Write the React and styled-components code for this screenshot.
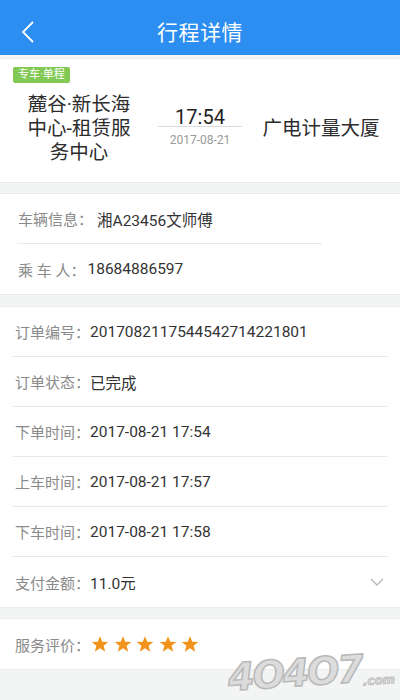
import styled, { createGlobalStyle } from "styled-components"

const GlobalStyle = createGlobalStyle`
  html, body {
    margin: 0;
    padding: 0;
    background: #f3f4f4;
  }
  body {
    font-family: Roboto, "Noto Sans CJK SC", sans-serif;
  }
  * {
    box-sizing: border-box;
  }
`

const Page = styled.div`
  position: relative;
  width: 400px;
  min-height: 700px;
  overflow: hidden;
  background: #f3f4f4;
`

const Header = styled.div`
  display: flex;
  align-items: center;
  justify-content: center;
  position: relative;
  height: 55px;
  padding-top: 7px;
  background: #2b8ef0;
  color: #fff;
`

const Title = styled.h1`
  margin: 0;
  font-size: 21px;
  font-weight: 400;
  letter-spacing: 0.5px;
`

const BackButton = styled.button`
  position: absolute;
  left: 16px;
  top: 19px;
  width: 24px;
  height: 26px;
  padding: 0;
  border: 0;
  background: none;
  display: flex;
  align-items: center;
  justify-content: center;
`

const Card = styled.div`
  background: #fff;
  margin-top: ${(p) => p.$gap || 10}px;
  border-top: 1px solid #ebebeb;
  border-bottom: 1px solid #ebebeb;
`

const TripCard = styled(Card)`
  padding: 4px 0 13px;
`

const Tag = styled.span`
  display: inline-block;
  margin-left: 13px;
  height: 16px;
  padding: 0 5px;
  line-height: 16px;
  font-size: 11px;
  color: #fff;
  background: #82c954;
  border-radius: 2px;
`

const Route = styled.div`
  display: grid;
  grid-template-columns: 158px 84px 158px;
  align-items: center;
  height: 80px;
  margin-top: 6px;
`

const Place = styled.div`
  text-align: center;
  font-size: 19.5px;
  line-height: 24px;
  color: #2c2c2c;
`

const TimeBox = styled.div`
  display: flex;
  flex-direction: column;
  align-items: center;
  margin-top: -3px;
`

const Clock = styled.div`
  width: 84px;
  text-align: center;
  font-size: 20px;
  line-height: 18px;
  color: #222;
  border-bottom: 1px solid #dcdcdc;
`

const DateText = styled.div`
  margin-top: 5px;
  font-size: 12px;
  line-height: 16px;
  color: #9a9a9a;
`

const Row = styled.div`
  display: flex;
  align-items: center;
  height: 50px;
  margin: 0 ${(p) => p.$inset || 13}px;
  padding-left: ${(p) => p.$pad || 2}px;
  border-bottom: ${(p) => (p.$last ? "none" : "1px solid #e8e8e8")};
  font-size: 15px;
`

const ShortRow = styled(Row)`
  margin-right: 78px;
`

const Label = styled.span`
  color: #8a8a8a;
  white-space: pre;
  margin-right: ${(p) => p.$space || 0}px;
`

const Value = styled.span`
  color: #333;
  font-size: 15.5px;
  flex: 1;
`

const Stars = styled.div`
  display: flex;
  gap: 4.5px;
  margin-left: 1px;
`

const Chevron = styled.span`
  display: flex;
  margin-right: 3px;
`

const Watermark = styled.div`
  position: absolute;
  right: 6px;
  bottom: 8px;
  display: flex;
  align-items: flex-end;
  transform: rotate(-4deg);
  font-family: "DejaVu Sans", sans-serif;
  font-weight: 900;
  font-style: italic;
  color: #dcdcdc;
  -webkit-text-stroke: 1.5px #b9b9b9;
  pointer-events: none;
`

const MarkBig = styled.span`
  font-size: 38px;
  line-height: 40px;
  letter-spacing: -2px;
`

const MarkSmall = styled.span`
  font-size: 12px;
  line-height: 14px;
  -webkit-text-stroke: 0.8px #b9b9b9;
`

const Star = () => (
  <svg width="18" height="18" viewBox="0 0 24 24">
    <polygon
      points="12,1.5 15,9 23,9.3 16.8,14.3 19,22.2 12,17.7 5,22.2 7.2,14.3 1,9.3 9,9"
      fill="#f2931c"
    />
  </svg>
)

const orderRows = [
  ["订单编号：", "2017082117544542714221801"],
  ["订单状态：", "已完成"],
  ["下单时间：", "2017-08-21 17:54"],
  ["上车时间：", "2017-08-21 17:57"],
  ["下车时间：", "2017-08-21 17:58"],
]

const App = () => {
  return (
    <Page>
      <GlobalStyle />
      <Header>
        <BackButton>
          <svg width="14" height="22" viewBox="0 0 14 22">
            <polyline
              points="12,1 2,11 12,21"
              fill="none"
              stroke="#fff"
              strokeWidth="1.8"
            />
          </svg>
        </BackButton>
        <Title>行程详情</Title>
      </Header>

      <TripCard $gap={3}>
        <Tag>专车·单程</Tag>
        <Route>
          <Place>
            麓谷·新长海
            <br />
            中心-租赁服
            <br />
            务中心
          </Place>
          <TimeBox>
            <Clock>17:54</Clock>
            <DateText>2017-08-21</DateText>
          </TimeBox>
          <Place>广电计量大厦</Place>
        </Route>
      </TripCard>

      <Card>
        <ShortRow $inset={17} $pad={1}>
          <Label $space={4}>车辆信息：</Label>
          <Value>湘A23456文师傅</Value>
        </ShortRow>
        <Row $inset={17} $pad={1} $last>
          <Label $space={2}>乘 车 人：</Label>
          <Value>18684886597</Value>
        </Row>
      </Card>

      <Card $gap={11}>
        {orderRows.map(([label, value]) => (
          <Row key={label}>
            <Label>{label}</Label>
            <Value>{value}</Value>
          </Row>
        ))}
        <Row $last>
          <Label>支付金额：</Label>
          <Value>11.0元</Value>
          <Chevron>
            <svg width="14" height="9" viewBox="0 0 14 9">
              <polyline
                points="1,1 7,7 13,1"
                fill="none"
                stroke="#b5b5b5"
                strokeWidth="1.3"
              />
            </svg>
          </Chevron>
        </Row>
      </Card>

      <Card $gap={10}>
        <Row $last>
          <Label>服务评价：</Label>
          <Stars>
            {[0, 1, 2, 3, 4].map((i) => (
              <Star key={i} />
            ))}
          </Stars>
        </Row>
      </Card>

      <Watermark>
        <MarkBig>4O4O7</MarkBig>
        <MarkSmall>.com</MarkSmall>
      </Watermark>
    </Page>
  )
}

export default App
